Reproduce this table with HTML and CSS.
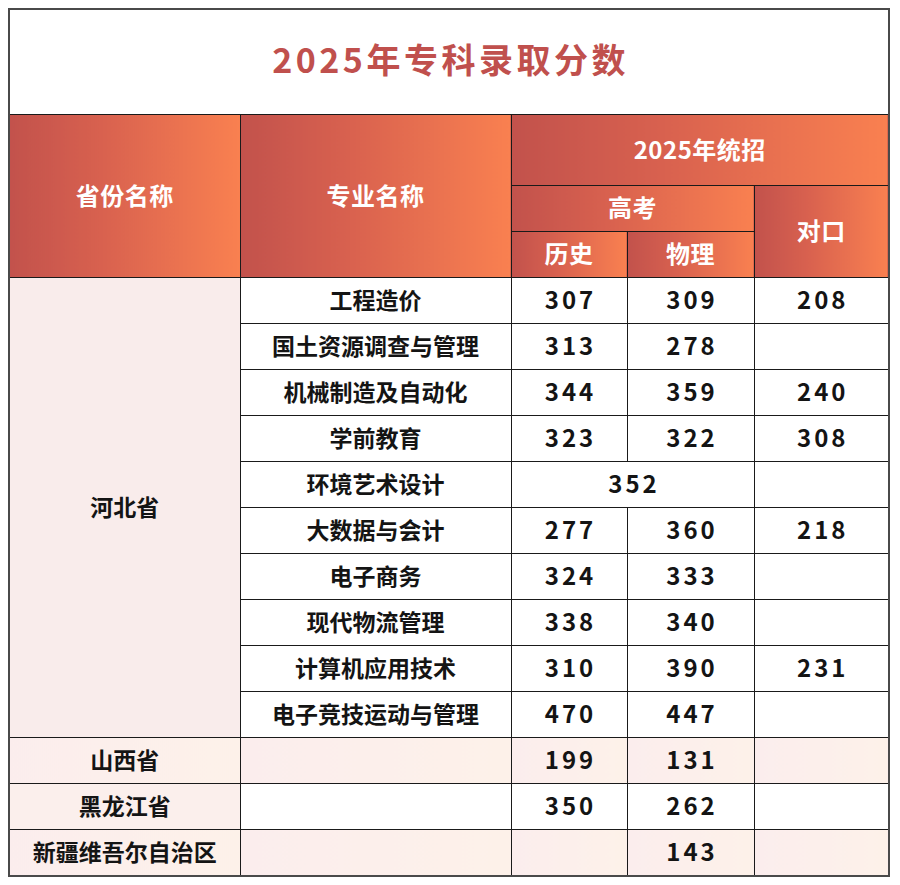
FILE: index.html
```html
<!DOCTYPE html>
<html lang="zh-CN">
<head>
<meta charset="utf-8">
<title>2025年专科录取分数</title>
<link rel="stylesheet" href="styles.css">
</head>
<body>
<div class="frame">
<table class="scores">
  <colgroup>
    <col class="c-prov">
    <col class="c-major">
    <col class="c-hist">
    <col class="c-phys">
    <col class="c-dk">
  </colgroup>
  <tr class="r-title"><td colspan="5" class="title">2025年专科录取分数</td></tr>
  <tr class="r-h1">
    <th rowspan="3" class="hd">省份名称</th>
    <th rowspan="3" class="hd">专业名称</th>
    <th colspan="3" class="hd">2025年统招</th>
  </tr>
  <tr class="r-h2">
    <th colspan="2" class="hd">高考</th>
    <th rowspan="2" class="hd">对口</th>
  </tr>
  <tr class="r-h3">
    <th class="hd">历史</th>
    <th class="hd">物理</th>
  </tr>
  <tr>
    <td rowspan="10" class="prov prov-hb">河北省</td>
    <td>工程造价</td><td class="num">307</td><td class="num">309</td><td class="num">208</td>
  </tr>
  <tr><td>国土资源调查与管理</td><td class="num">313</td><td class="num">278</td><td></td></tr>
  <tr><td>机械制造及自动化</td><td class="num">344</td><td class="num">359</td><td class="num">240</td></tr>
  <tr><td>学前教育</td><td class="num">323</td><td class="num">322</td><td class="num">308</td></tr>
  <tr><td>环境艺术设计</td><td colspan="2" class="num">352</td><td></td></tr>
  <tr><td>大数据与会计</td><td class="num">277</td><td class="num">360</td><td class="num">218</td></tr>
  <tr><td>电子商务</td><td class="num">324</td><td class="num">333</td><td></td></tr>
  <tr><td>现代物流管理</td><td class="num">338</td><td class="num">340</td><td></td></tr>
  <tr><td>计算机应用技术</td><td class="num">310</td><td class="num">390</td><td class="num">231</td></tr>
  <tr><td>电子竞技运动与管理</td><td class="num">470</td><td class="num">447</td><td></td></tr>
  <tr class="pink"><td class="prov">山西省</td><td></td><td class="num">199</td><td class="num">131</td><td></td></tr>
  <tr><td class="prov">黑龙江省</td><td></td><td class="num">350</td><td class="num">262</td><td></td></tr>
  <tr class="pink"><td class="prov">新疆维吾尔自治区</td><td></td><td></td><td class="num">143</td><td></td></tr>
</table>
</div>
</body>
</html>
```

FILE: styles.css
```css
html, body {
  margin: 0;
  padding: 0;
  background: #ffffff;
}

body {
  padding: 8px 0 0 8px;
  font-family: "Noto Sans CJK SC", "Noto Sans", sans-serif;
}

.frame {
  width: 878px;
  border: 2px solid #4a4a4a;
  background: #ffffff;
}

.scores {
  width: 878px;
  border-collapse: collapse;
  table-layout: fixed;
  border-style: hidden;
}

.c-prov { width: 230px; }
.c-major { width: 271px; }
.c-hist { width: 116px; }
.c-phys { width: 127px; }
.c-dk { width: 134px; }

.scores td,
.scores th {
  border: 1px solid #1a1a1a;
  padding: 0 0 3px 0;
  text-align: center;
  vertical-align: middle;
  font-weight: 700;
  font-size: 23px;
  line-height: 1;
  color: #141414;
  height: 42px;
  background: #ffffff;
}

.scores .title {
  height: 98px;
  font-size: 34px;
  color: #c0504d;
  letter-spacing: 3.5px;
  padding: 0 0 6px 3px;
}

.scores .hd {
  color: #ffffff;
  background: linear-gradient(to right, #c2524c 0%, #d8614f 40%, #f98050 100%);
  font-size: 24px;
  letter-spacing: 0.5px;
}

.r-h1 .hd { height: 67px; }
.r-h2 .hd { height: 42px; }
.r-h3 .hd { height: 42px; }

.scores .num {
  font-size: 24px;
  letter-spacing: 3px;
  padding-left: 3px;
}

.scores .prov {
  background: #fbefec;
}

.scores .prov-hb {
  background: #f9eceb;
}

.scores .pink td {
  background: linear-gradient(to right, #fbeded 0%, #fcefeb 50%, #fdf1e9 100%);
}
```
